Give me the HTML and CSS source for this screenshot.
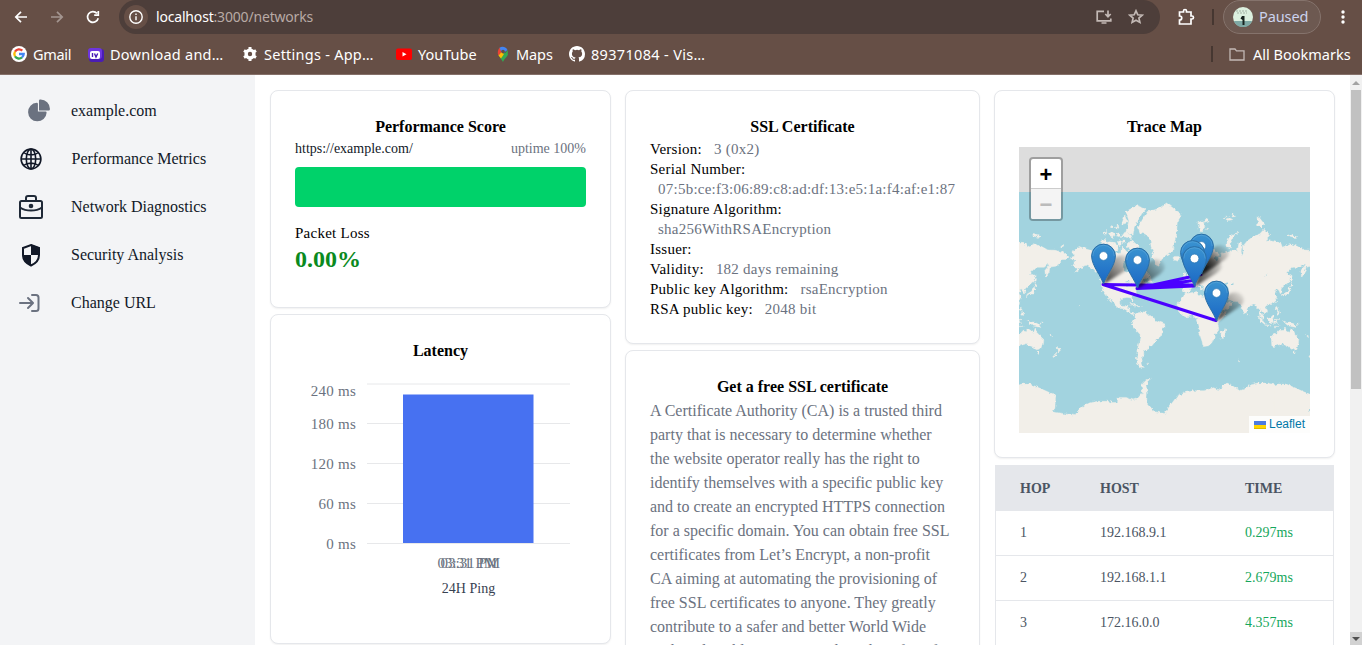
FILE: index.html
```html
<!DOCTYPE html>
<html lang="en">
<head>
<meta charset="utf-8">
<title>Networks</title>
<link rel="stylesheet" href="styles.css">
</head>
<body>
<header class="browser">
  <div class="toolbar">
    <div class="nav">
      <svg class="ic" viewBox="0 0 16 16"><path d="M14 8H3M8 2.8 2.8 8 8 13.2"/></svg>
      <svg class="ic dim" viewBox="0 0 16 16"><path d="M2 8h11M8 2.8 13.2 8 8 13.2"/></svg>
      <svg class="ic" viewBox="0 0 16 16"><path d="M13.2 9.2A5.4 5.4 0 1 1 12 4.4M13.3 2v4.2H9.2"/></svg>
    </div>
    <div class="omnibox">
      <span class="info"><svg class="ic" viewBox="0 0 16 16"><circle cx="8" cy="8" r="6.2"/><path d="M8 7.2v4M8 4.6v1.5"/></svg></span>
      <span class="url">localhost<i>:3000/networks</i></span>
      <svg class="ic soft" viewBox="0 0 16 16"><path d="M8 2.3H1.2v9.5h13.6V9.500M5.500 14h5M12 1.500v6M9.300 5 12 7.700 14.700 5"/></svg>
      <svg class="ic soft star" viewBox="0 0 16 16"><path d="m8 1.800 1.800 4 4.400.4-3.300 2.900 1 4.300L8 11.200l-3.900 2.200 1-4.300L1.800 6.200l4.400-.4z"/></svg>
    </div>
    <svg class="ic puzzle" viewBox="0 0 18 18"><path d="M2.500 4h4V3a1.500 1.500 0 0 1 3 0v1H14v4h1a1.500 1.500 0 0 1 0 3h-1v5H2.500v-4c3 0 3-4 0-4z"/></svg>
    <span class="sep"></span>
    <div class="profile">
      <svg class="avatar" viewBox="0 0 20 20"><circle cx="10" cy="10" r="10" fill="#dcf0df"/><path d="M.8 14h18.400a10 10 0 0 1-18.400 0z" fill="#7ea8a4"/><path d="M3 4h12M4 6h10" stroke="#a3b2a4" stroke-dasharray="2 1"/><path d="M9 9h2.500v9h-2v-5l-2-1.500z" fill="#18231f"/></svg>
      <span>Paused</span>
    </div>
    <svg class="dots" viewBox="0 0 4 16"><circle cx="2" cy="3" r="1.700"/><circle cx="2" cy="8" r="1.700"/><circle cx="2" cy="13" r="1.700"/></svg>
  </div>
  <div class="bookmarks">
    <a class="tight"><svg viewBox="0 0 16 16"><circle cx="8" cy="8" r="8" fill="#fff"/><g fill="none" stroke-width="2.300"><path d="M11.300 4.600A4.700 4.700 0 0 0 4 5.600" stroke="#ea4335"/><path d="M4 5.600a4.700 4.700 0 0 0 0 4.800" stroke="#fbbc04"/><path d="M4 10.400a4.700 4.700 0 0 0 7 1" stroke="#34a853"/><path d="M11 11.400A4.700 4.700 0 0 0 12.700 8H8" stroke="#4285f4"/></g></svg>Gmail</a>
    <a class="wide"><svg viewBox="0 0 16 16"><rect x="1" y="3" width="15" height="13" rx="3" fill="#4a1db5"/><rect x="0" y="2" width="14" height="11" rx="3" fill="#6d35de"/><rect x="2" y="5" width="10" height="8" rx="2" fill="#fff"/><path d="M4.500 7v4M6.500 7.500 8 11l1.700-3.500" fill="none" stroke="#4a1db5" stroke-width="1.400"/></svg>Download and…</a>
    <a class="wide"><svg viewBox="0 0 16 16"><circle cx="8" cy="8" r="3.900" fill="none" stroke="#fff" stroke-width="3.400"/><path d="M8 1v2.500M8 12.500V15M2 4.500l2 1.200M12 10.300l2 1.200M2 11.500l2-1.200M12 5.700l2-1.200" stroke="#fff" stroke-width="3"/></svg>Settings - App…</a>
    <a><svg viewBox="0 0 16 16"><rect y="2.500" width="16" height="11.500" rx="2" fill="#f00"/><path d="m6.500 6 4 2.200-4 2.200z" fill="#fff"/></svg><span class="yt">YouTube</span></a>
    <a class="maps"><svg viewBox="0 0 16 16"><path d="M8 16 3.500 9 8 6l5 2c-.5 3-3.500 4-5 8z" fill="#34a853"/><path d="M3.500 9.500C2 7 3 3 5 1.500L8 5.500z" fill="#ea4335"/><path d="M3.500 9.500 6 12.500 9 8 6.500 6z" fill="#fbbc04"/><path d="M4.500 1.800A5.200 5.200 0 0 1 12.500 4L8.500 7 6 5z" fill="#4285f4"/><path d="M12.500 4c1 3 0 4.500-1 6L9 9z" fill="#34a853"/><circle cx="8" cy="5.600" r="1.800" fill="#664f46"/></svg>Maps</a>
    <a class="wider"><svg viewBox="0 0 16 16"><path fill="#fff" d="M8 0C3.580 0 0 3.580 0 8c0 3.540 2.290 6.530 5.470 7.590.4.070.55-.17.550-.38 0-.19-.01-.82-.01-1.490-2.010.37-2.530-.49-2.690-.94-.09-.23-.48-.94-.82-1.130-.28-.15-.68-.52-.01-.53.63-.01 1.080.58 1.230.82.72 1.210 1.870.87 2.330.66.07-.52.280-.87.510-1.070-1.780-.2-3.640-.89-3.640-3.950 0-.87.310-1.590.82-2.150-.08-.2-.36-1.020.08-2.120 0 0 .67-.21 2.200.82a7.600 7.600 0 0 1 4 0c1.530-1.040 2.200-.82 2.200-.82.44 1.100.16 1.920.08 2.120.51.56.82 1.270.82 2.150 0 3.070-1.870 3.750-3.650 3.950.29.250.54.730.54 1.480 0 1.070-.01 1.930-.01 2.200 0 .21.150.46.55.38A8 8 0 0 0 16 8c0-4.420-3.580-8-8-8z"/></svg>89371084 - Vis…</a>
    <span class="sep"></span>
    <a class="all"><svg class="ic soft" viewBox="0 0 16 16"><path d="M1 3h5l1.500 1.800H15V14H1z" stroke-width="1.300"/></svg>All Bookmarks</a>
  </div>
</header>

<div class="page">
  <aside class="sidebar">
    <a><span class="slot shifted"><svg width="24" height="24" viewBox="0 0 22 21" fill="#6b7280"><path d="M16.975 11H10V4.025a1 1 0 0 0-1.066-.998 8.500 8.500 0 1 0 9.039 9.039.999.999 0 0 0-1-1.066h.002Z"/><path d="M12.500 0c-.157 0-.311.010-.565.027A1 1 0 0 0 11 1.020V10h8.975a1 1 0 0 0 1-.935c.013-.188.028-.374.028-.565A8.510 8.510 0 0 0 12.500 0Z"/></svg></span>example.com</a>
    <a class="nudge"><span class="slot"><svg width="24" height="24" viewBox="0 0 24 24" fill="none" stroke="#111827" stroke-width="1.600"><circle cx="12" cy="12" r="9.900"/><ellipse cx="12" cy="12" rx="4.700" ry="9.900"/><path d="M2 12h20M12 2v20M4.500 5.500c4 3.200 11 3.200 15 0M4.500 18.500c4-3.200 11-3.200 15 0"/></svg></span>Performance Metrics</a>
    <a><span class="slot"><svg width="24" height="24" viewBox="0 0 24 24" fill="none" stroke="#1f2937" stroke-width="2"><rect x="1" y="6" width="22" height="17" rx="1.500"/><path d="M7 6V3q0-2 2-2h6q2 0 2 2v3M1 12.500c6 4 16 4 22 0"/><circle cx="12" cy="11" r="2.300" fill="#1f2937" stroke="none"/></svg></span>Network Diagnostics</a>
    <a><span class="slot"><svg width="24" height="24" viewBox="0 0 24 24"><path d="M12 2 20 5v7c0 5-3.500 8.500-8 10.500C7.500 20.500 4 17 4 12V5z" fill="#f3f4f6" stroke="#111827" stroke-width="2"/><path d="M12 1.500 20.500 4.500V12H12zM12 12v10.500C7.500 20.500 3.500 17 3.500 12z" fill="#111827"/></svg></span>Security Analysis</a>
    <a><span class="slot"><svg width="24" height="24" viewBox="0 0 24 24" fill="none" stroke="#6b7280" stroke-width="2" stroke-linecap="round" stroke-linejoin="round"><path d="M1 12h12.500M9 7l5 5-5 5M13 4h4q2.500 0 2.500 2.500v11q0 2.500-2.500 2.500h-4"/></svg></span>Change URL</a>
  </aside>

  <main class="columns">
    <div class="col">
      <section class="card score">
        <h2>Performance Score</h2>
        <div class="row"><span>https://example.com/</span><span class="muted">uptime 100%</span></div>
        <div class="bar"></div>
        <div class="label">Packet Loss</div>
        <div class="loss">0.00%</div>
      </section>
      <section class="card latency">
        <h2>Latency</h2>
        <svg class="chart" width="291" height="250" viewBox="0 0 291 250">
          <g class="grid"><path d="M72 21h203M72 60.500h203M72 100.500h203M72 140.500h203M72 180.500h203"/></g>
          <rect x="108" y="31.500" width="130.500" height="148.500" fill="#4771f1"/>
          <g class="ticks"><text x="61" y="33">240 ms</text><text x="61" y="66">180 ms</text><text x="61" y="106">120 ms</text><text x="61" y="146">60 ms</text><text x="61" y="186">0 ms</text></g>
          <g class="times"><text x="142.500" y="205">03:31 PM</text><text x="145.500" y="205">03:31 PM</text></g>
          <text class="caption" x="173.500" y="230">24H Ping</text>
        </svg>
      </section>
    </div>

    <div class="col">
      <section class="card ssl">
        <h2>SSL Certificate</h2>
        <div>Version: <span>3 (0x2)</span></div>
        <div>Serial Number: <br><span>07:5b:ce:f3:06:89:c8:ad:df:13:e5:1a:f4:af:e1:87</span></div>
        <div>Signature Algorithm: <br><span>sha256WithRSAEncryption</span></div>
        <div>Issuer:</div>
        <div>Validity: <span>182 days remaining</span></div>
        <div>Public key Algorithm: <span>rsaEncryption</span></div>
        <div>RSA public key: <span>2048 bit</span></div>
      </section>
      <section class="card free">
        <h2>Get a free SSL certificate</h2>
        <p>A Certificate Authority (CA) is a trusted third<br>party that is necessary to determine whether<br>the website operator really has the right to<br>identify themselves with a specific public key<br>and to create an encrypted HTTPS connection<br>for a specific domain. You can obtain free SSL<br>certificates from Let’s Encrypt, a non-profit<br>CA aiming at automating the provisioning of<br>free SSL certificates to anyone. They greatly<br>contribute to a safer and better World Wide<br>Web and enable everyone to have benefits of</p>
      </section>
    </div>

    <div class="col">
      <section class="card trace">
        <h2>Trace Map</h2>
        <div class="map">
          <svg id="world" width="291" height="286" viewBox="0 0 291 286">
            <defs>
              <linearGradient id="pinFill" x1="0" y1="0" x2="0" y2="1"><stop offset="0" stop-color="#3a93d0"/><stop offset="1" stop-color="#1a67c5"/></linearGradient>
              <linearGradient id="shade" x1="0" y1="1" x2="1" y2="0"><stop offset="0" stop-opacity=".8"/><stop offset="1" stop-opacity=".02"/></linearGradient>
              <filter id="soft" x="-50%" y="-50%" width="200%" height="200%"><feGaussianBlur stdDeviation="1.800"/></filter>
              <path id="shadow" d="M0 0 8-23Q16-33 25-27 31-20 22-14z" fill="url(#shade)" filter="url(#soft)"/>
              <g id="pin"><path d="M0-.5C-2-8-11.900-19-11.900-28.500a11.900 11.900 0 0 1 23.800 0C11.900-19 2-8 0-.5z" fill="url(#pinFill)" stroke="#2a6ea5"/><path d="M-10.700-28.500a10.700 10.700 0 0 1 21.400 0" fill="none" stroke="#6db3e2" stroke-opacity=".4"/><circle cy="-28.500" r="4.400" fill="#fff" stroke="#2c77b5" stroke-width=".8"/></g>
              <filter id="coast" x="0" y="0" width="291" height="286" filterUnits="userSpaceOnUse"><feTurbulence type="fractalNoise" baseFrequency=".3" numOctaves="2" seed="4"/><feDisplacementMap in="SourceGraphic" scale="4" xChannelSelector="R" yChannelSelector="G"/></filter>
            </defs>
            <rect y="45" width="291" height="241" fill="#a2d3df"/>
            <g filter="url(#coast)">
              <g id="land" fill="#f2efe9" stroke="#f2efe9" stroke-width=".4"></g>
              <g id="seas" fill="#a2d3df"></g>
              <path d="M-5 258h301v34H-5z" fill="#f2efe9" transform="translate(0 12)"/>
            </g>
            <rect y="278" width="291" height="8" fill="#f2efe9"/>
            <rect width="291" height="45" fill="#ddd"/>
            <g fill="none" stroke="#4b00ff" stroke-width="3" stroke-linejoin="round" stroke-linecap="round"><path d="M197 173.500 84 137.500 118 138 175 138M118 141.500l57-2.500M118 141.500l56-8M118 141.500l64-14"/></g>
            <g id="pins"></g>
          </svg>
          <div class="zoom"><b>+</b><b class="off">−</b></div>
          <div class="credit"><svg width="12" height="8"><path fill="#4C7BE1" d="M0 0h12v4H0z"/><path fill="#FFD500" d="M0 4h12v3H0z"/><path fill="#E0BC00" d="M0 7h12v1H0z"/></svg>Leaflet</div>
        </div>
      </section>
      <table class="hops">
        <thead><tr><th class="hop">HOP</th><th class="host">HOST</th><th>TIME</th></tr></thead>
        <tbody>
          <tr><td>1</td><td>192.168.9.1</td><td class="ok">0.297ms</td></tr>
          <tr><td>2</td><td>192.168.1.1</td><td class="ok">2.679ms</td></tr>
          <tr><td>3</td><td>172.16.0.0</td><td class="ok">4.357ms</td></tr>
        </tbody>
      </table>
    </div>
  </main>
  <div class="scroll"><i class="up"></i><span></span><svg class="down" viewBox="0 0 12 13"><path d="M2 5h8L6 9z"/></svg></div>
</div>
<script src="map.js"></script>
</body>
</html>
```
FILE: map.js
```js
// Coastlines as "lon,lat" rings, drawn in Web Mercator with a 256px world.
const land = [
  // Eurasia and Africa
  "-9,37 -9.5,39 -9,43 -2,43.5 -1,46 -4.5,48.3 -1.5,48.7 -1.8,49.7 1.5,50.3 4,52 5,53.3 8.500,53.800 8.200,57 10.500,57.600 10,55.500 11,54 14,54 18.500,54.700 21,55.500 21.500,57.500 24,57.200 24,59 28,59.700 29,60.200 23,60 21.500,61 21.500,63 25,65 24,65.800 22,65.500 17.500,62 17.500,60.500 18.500,59.800 16.500,57 15,56 13,55.500 11,59 8,58 5.500,59 5,62 10,64 14,67.500 19,69.800 25,71 31,70.200 33,69.300 41,67.500 40,66.200 33,66.700 35,64.300 38,64 40,65 42,66.500 44,66.200 44,68.300 46,68 53,68.500 54,68 60,69 61,69.800 65,69 68,68.500 67,70 69,73 73,72.500 72,69 73,66.500 75,68 74,71.500 76,72 80,73.500 87,75 95,76 98,76.200 104,77.700 112,76 107,73.500 113,73.700 123,73 127,73.300 130,71 140,72.500 150,71.500 160,69.700 170,69.500 180,68.800 190,66 186,64.500 180,64.500 178,62.500 171,60 163,59.500 162,56 157,51.200 156,57 163,61.500 160,61.500 155,59.300 143,59.300 135,54.700 141,53 140,48 132,43 128,40 129,36 127,34.500 125.500,38 122,40.500 121,39 118,39 122,37 119.500,35 122,31 120,26.500 114,22.300 108,21.500 106,19 109,13 107,10.500 105,8.700 102,12.500 100,13.300 99.500,10 103,4.500 104,1.300 101,3 98.500,8 97.500,16 94.500,16 92,21.500 89,22 86,20.500 80,15.500 80,12 77.500,8 74,14 72.500,20 70,21 67,25 61,25 57,27 51,29 48,30 50,27 51.500,25 54,24 56,26 58,23.500 59.800,22.500 55,17.500 52,16 45,12.800 43,13 42.500,16 39,21 35,28 35,29.500 34,28 32.500,30 33.500,27.500 35.500,24 37,21 37.500,18.500 39.500,15.500 43,12 44,10.500 51,12 50,8 46,3 40,-3 39,-7 40.500,-11 40,-15 35,-20 35.500,-24 32.500,-26 31,-30 26,-34 20,-34.800 18,-33 17,-29 14.500,-22 12,-17 13.500,-12 12,-6 9,-1 9.500,4 6,4.300 4,6.300 -2,4.800 -8,4.300 -13,8.500 -17,13 -16.500,19 -17,21 -13,27.500 -10,30 -9,33 -6,35.800 -2,35.200 10,37.200 11,33.500 15,32 20,31 20,32.800 25,31.800 32,31 34.300,31.500 36,35 36,36.700 30,36.500 27,37.500 26.500,40 30,41.200 35,42 41,41.300 38,44.500 39,47 35,46.500 33,44.500 33,46 30.500,46 28,43 28,41 24,40.700 23,39 24,38 22.500,36.500 19.500,40 19,42 14,45 12.500,45 14,42.500 18.500,40 16.500,39.500 16,38 12.500,41.500 9,44.300 3,43 3,41.500 -.5,38.500 -2,36.800 -5.500,36",
  // North and Central America
  "-168,65.600 -162,66.500 -166,68.500 -156,71.300 -145,70 -135,69 -128,70.500 -123,69.500 -115,68 -108,68 -101,67.800 -96,68.200 -95,71.500 -92,70 -88,68.500 -85,69.500 -81.500,69 -82,67 -87,65 -94,61.500 -94.500,58.800 -92,57 -85,55.300 -82,55 -82,52.800 -79.500,51.300 -79,54.500 -76.500,57 -78,59 -77.500,62.500 -73,62 -69.500,61 -69.500,58.900 -66,58.800 -64.500,60.300 -61,56 -56,53 -57,51.500 -60,50.200 -66,50.200 -69,48.500 -65,48.500 -64.500,46.500 -61,46 -66,43.500 -67,45 -70,43.500 -70,41.700 -74,40.500 -76,38 -75.700,35.500 -81,31.500 -80,26.500 -81,25.200 -83,29.500 -89,30.300 -94,29.500 -97.500,27 -97.500,22 -95,18.500 -91,18.700 -90,21 -87,21.500 -88.500,16 -83.500,15 -83.500,10.500 -80,9 -77,8.500 -79,7.500 -83,8.200 -86,11 -88,13 -94,16 -97,15.700 -105,20 -106,23 -112,29 -114.700,31.500 -110,24 -112,25 -115,29 -118,34 -121,35 -124,40 -124.300,48 -123,49 -130,55 -137,58.700 -146,60.700 -151,60 -154,58.500 -162,55 -158,58.500 -162,59 -165,61 -161,64 -166,64.500",
  // South America
  "-77,8 -72,12 -62,10.700 -57,6 -51,4.500 -50,0 -44,-2.500 -35.500,-5.500 -35,-8.500 -39,-13 -39.500,-19 -42,-23 -48,-26 -49,-29 -53.500,-34 -58,-34 -57,-37 -62,-39 -65,-41 -65,-44 -67.500,-46 -66,-48 -69,-51 -68.500,-53 -65,-55 -70,-55.300 -74,-52 -75.500,-47 -73,-42 -73.500,-37 -71.500,-30 -70,-20 -76,-14 -81,-6 -80,-2.500 -77.500,2",
  // Greenland
  "-44,60 -48,61 -52,65 -54,67.500 -51,69.500 -54.500,71 -56,74 -61,76 -70,76.500 -73,78.200 -66,80.500 -60,82 -45,82.500 -33,83.500 -22,82.500 -12,81.500 -18,79.500 -19,76 -22,73 -25,71 -22,70.200 -30,68 -38,65.800 -42,62.500",
  // Canadian Arctic
  "-91,76.500 -80,76.200 -78,78.500 -68,81.500 -62,82.500 -75,83.100 -90,82 -86,80 -88,78",
  "-96,79 -88,79.500 -92,81.300", "-105,78.200 -100,78 -101,79", "-116,76 -108,75 -105,76 -110,77",
  "-122,76.500 -118,76 -117,77.300", "-104,75.500 -98,75.200 -98,76.500 -103,76.500", "-112,78.300 -109,78 -110,78.800",
  "-97,75 -93,75.200 -81,74.600 -83,75.800 -92,76.700", "-90,71.500 -84,70 -76,69 -72,67.500 -73,64.600 -66,62 -65,65 -62,66.700 -68,70 -78,73 -85,73.700",
  "-117,69.500 -105,69 -101,70 -105,73 -115,73.300 -118,71.500", "-124,71.500 -120,71.500 -116,73 -119,74.200 -124,74.200",
  "-101,72 -97,71.500 -97,73.800 -102,73.500", "-95,72.500 -91,73 -91,74 -95,74", "-86,64 -81,63.500 -85,65.800", "-59,47.700 -53,46.700 -56,51.500",
  "-128,50.500 -123.500,48.500 -125,50",
  // Islands of the Atlantic and Arctic
  "-5.500,50 1,51 1.500,52.700 -2,55.800 -3,58.500 -6,57 -3,54 -5,52", "-10,51.700 -6,52.200 -6,55 -10,54", "-24,65.500 -22,64 -19,63.500 -14,65 -16,66.300 -22,66.300",
  "11,79.500 14,77 18,77 21,78.500 18,80", "20,79.600 27,80 22,80.400", "25,77.800 23,78 22,77.600", "52,71.300 57,70.700 56,73 61,75.500 69,76.800 62,76.200 55,75 52,73",
  "95,79 100,78.200 105,79 96,81", "137,75.700 147,75 150,75.200 140,76", "178,71 182,71.300 180,71.700", "50,80 60,80.300 53,80.900", "59,80.900 64,81 61,81.500", "48,80.500 50,80.800 47,80.800",
  // Caribbean
  "-85,22 -78,22.500 -74.500,20 -78,20 -82,22.500", "-74,18.300 -68.500,18.500 -70,20 -73,20", "-78,18 -76.500,18 -77,18.500",
  // Asia and Pacific
  "44,-16 46,-16 50,-12.300 50,-16 47,-25 44,-24.500 43.500,-22", "80,8 81.500,7 80.500,9.500", "130,31 132,34 136,33.500 140,35 142,40 140,41 137,37 131,34.300", "140,42 145,43.500 142,45.500",
  "142,46 144,49 143,54 142,52", "120,22.500 122,25 121,25", "120,14 124,13 122,18.500 120.500,18", "122,7 126,6.500 126,9.500 124,12 123,9", "109,1 111,-3 116,-4 119,5 117,7 113,3",
  "95,5.500 98,4.500 106,-4 105,-6 101,-3", "105,-7 114,-8.500 112,-7", "119,-3 120,1 125,1 121,0 123,-5 121,-3 119.500,-5.500", "131,-1 135,-3 141,-3 147,-6 150,-10.500 143,-9 138,-8 133,-4",
  "149,-6 152,-4 151,-6", "118,-9 127,-8.500 119,-9.500", "114,-22 122,-18 126,-14 130,-15 131,-12 136,-12 136,-15 140,-17.500 142.500,-11 146,-18.500 153,-25.500 152.500,-32 150,-37.500 144,-38.500 138,-35 135,-34 131,-31.500 124,-33 118,-35 115,-34",
  "145,-41 148,-41 147,-43.500", "173,-35 178.500,-38 175,-41.500 174.500,-38", "173,-41 171,-44.500 169,-46.500 167,-46 171,-42.500", "164,-20 167,-22.500 165,-21.500", "-156,19 -155,19.500 -156,20",
  "-60,-51.500 -58,-52 -60,-52.300", "68,-49 70,-49.500 69,-49.800",
  // Antarctica
  "-240,-67 -236,-66.500 -225,-67 -210,-69 -200,-71 -189,-72 -190,-77 -195,-78 -175,-78.600 -162,-79 -157,-77.500 -146,-75.500 -130,-74.500 -115,-74.500 -110,-75 -102,-75 -101,-73 -90,-73 -80,-74 -74,-73.500 -67,-71 -68,-67 -62,-64.500 -56,-63 -62,-67 -60,-71 -61,-75 -50,-78 -36,-78.500 -28,-76 -18,-72.500 -8,-71 5,-70 20,-70 33,-68.500 40,-69.500 52,-66 58,-67 70,-70 78,-69 84,-67 95,-66 110,-66 120,-67 135,-66.500 150,-69 160,-70.500 171,-72 168,-77 165,-78.500 180,-79 180,-85.500 -240,-85.500"
];
const seas = [
  "47,45 53,46.800 53,45 51,44.500 54,41 54,37 49,37.500 49,41", "-92,47 -85,48.500 -85,46.500", "-87.500,42 -85,46 -88,44", "-83,46 -80,45 -82,43.500",
  "31,-2.500 34,-.5 34,-2.500", "104,51.500 110,55.500 106,52.500", "58,44 61,46.500 61,44"
];

const project = (lon, lat) => {
  const r = lat * Math.PI / 180;
  return [171 + lon * 256 / 360, 173 - Math.log(Math.tan(Math.PI / 4 + r / 2)) * 128 / Math.PI];
};
const ring = (pts, shift) => "M" + pts.split(" ").map(p => {
  const [x, y] = project(...p.split(",").map(Number));
  return (x + shift).toFixed(1) + " " + y.toFixed(1);
}).join("L") + "Z";
const add = (parent, name, attrs) => {
  const el = document.createElementNS("http://www.w3.org/2000/svg", name);
  for (const k in attrs) el.setAttribute(k, attrs[k]);
  document.getElementById(parent).appendChild(el);
};
for (const shift of [-256, 0, 256]) {
  land.forEach(p => add("land", "path", { d: ring(p, shift) }));
  seas.forEach(p => add("seas", "path", { d: ring(p, shift) }));
}
const pins = [[182.500, 127.500], [173.500, 134], [84.500, 137.500], [175.500, 140], [118.500, 141.500], [197.500, 174.500]];
for (const shape of ["shadow", "pin"]) {
  pins.forEach(([x, y]) => add("pins", "use", { href: "#" + shape, x, y }));
}
```
FILE: styles.css
```css
* { box-sizing: border-box; }
body { margin: 0; width: 1362px; height: 645px; overflow: hidden; display: flex; flex-direction: column; background: #fff; font-family: "Liberation Serif", serif; font-size: 16px; line-height: 24px; color: #111827; }

/* browser frame */
.browser { flex: none; height: 75px; background: #664f46; border-bottom: 1px solid #857069; color: #fff; font-family: "Noto Sans", sans-serif; font-size: 14.5px; }
.ic { width: 16px; height: 16px; flex: none; fill: none; stroke: #fff; stroke-width: 1.7; }
.dim { opacity: .4; }
.soft { stroke: #c3b9b5; }
.toolbar { display: flex; align-items: center; height: 34px; }
.nav { display: flex; gap: 20px; width: 119px; padding-left: 13px; }
.omnibox { display: flex; align-items: center; width: 1041px; height: 34px; padding: 0 16px 0 5px; border-radius: 17px; background: #4d3e3a; }
.info { display: flex; align-items: center; justify-content: center; width: 24px; height: 24px; border-radius: 50%; background: #664f46; margin-right: 8px; }
.info .ic { stroke-width: 1.4; }
.url { flex: 1; font-size: 14px; letter-spacing: -.18px; }
.url i { font-style: normal; color: #b8aaa5; }
.star { margin-left: 16px; }
.puzzle { width: 18px; height: 18px; margin-left: 17px; }
.sep { width: 2px; height: 16px; background: #463731; }
.puzzle + .sep { margin-left: 17px; }
.profile { display: flex; align-items: center; gap: 6px; width: 98px; height: 34px; margin-left: 9px; padding-left: 9px; border: 1px solid #85736c; border-radius: 17px; background: #6d5951; color: #cbd3ee; line-height: 20px; }
.profile span { letter-spacing: -.1px; margin-top: -2px; }
.avatar { width: 20px; height: 20px; }
.dots { width: 4px; height: 16px; margin-left: 20px; fill: #fff; }
.bookmarks { display: grid; grid-template-columns: 77px 154px 154px 99px 74px 642px 18px 1fr; align-items: center; height: 39px; padding-left: 11px; }
.bookmarks a { display: flex; align-items: center; gap: 6px; white-space: nowrap; }
.bookmarks a svg { width: 16px; height: 16px; flex: none; }
.bookmarks .tight { letter-spacing: -.3px; }
.bookmarks .wide { letter-spacing: .25px; }
.bookmarks .wider { letter-spacing: .33px; }
.bookmarks .maps { gap: 5px; letter-spacing: -.1px; }
.bookmarks .all { gap: 8px; }

/* page */
.page { flex: 1; display: flex; min-height: 0; }
.sidebar { flex: none; width: 255px; padding-top: 12px; background: #f3f4f6; }
.sidebar a { display: flex; align-items: center; height: 48px; }
.slot { display: flex; width: 52px; margin-left: 19px; }
.slot.shifted { width: 44px; margin-left: 27px; }
.nudge .slot { width: 52.5px; }
.columns { flex: 1; display: grid; grid-template-columns: 341px 355px 341px; gap: 14px; padding: 15px; min-width: 0; align-items: start; overflow: hidden; }
.col { display: flex; flex-direction: column; gap: 6px; }
.card { padding: 24px; border: 1px solid #e5e7eb; border-radius: 8px; box-shadow: 0 1px 2px rgba(0,0,0,.06); background: #fff; }
h2 { margin: 0; font-size: 16px; line-height: 24px; text-align: center; color: #000; }
.muted { color: #6b7280; }

.score { height: 218px; }
.row { display: flex; justify-content: space-between; font-size: 14px; line-height: 20px; }
.bar { height: 40px; margin: 8px 0 16px; border-radius: 4px; background: #00d26a; }
.label { font-size: 15px; line-height: 20px; letter-spacing: .25px; color: #000; }
.loss { font-size: 24px; line-height: 32px; font-weight: 700; color: #0a8a1e; }

.latency { height: 330px; }
.chart { display: block; }
.grid { fill: none; stroke: #e7e8ea; }
.ticks { font-size: 15px; text-anchor: end; fill: #6b7280; letter-spacing: .25px; }
.times { font-size: 15px; fill: #6b7280; }
.caption { font-size: 14px; text-anchor: middle; fill: #374151; }

.ssl { height: 254px; font-size: 15px; color: #000; }
.ssl div { line-height: 20px; letter-spacing: .245px; white-space: nowrap; }
.ssl span { display: inline-block; margin-left: 8px; color: #6b7280; }
.free { height: 420px; }
.free p { margin: 0; color: #6b7280; white-space: nowrap; }

.trace { height: 368px; }
.map { position: relative; width: 291px; height: 286px; margin-top: 8px; overflow: hidden; }
.map > svg { display: block; }
.zoom { position: absolute; left: 10px; top: 10px; width: 34px; border: 2px solid rgba(0,0,0,.28); border-radius: 4px; background: #fff; background-clip: padding-box; }
.zoom b { display: block; height: 29px; font: bold 22px/31px "Liberation Sans", sans-serif; text-align: center; color: #000; }
.zoom .off { height: 31px; border-top: 1px solid #ccc; border-radius: 0 0 2px 2px; background: #f4f4f4; color: #bbb; }
.credit { position: absolute; right: 0; bottom: 0; display: flex; align-items: center; gap: 3px; height: 17px; padding: 0 5px; background: rgba(255,255,255,.85); color: #0078a8; font: 12px/17px "Liberation Sans", sans-serif; }

.hops { width: 339px; margin: 1px 0 0 1px; border-collapse: separate; border-spacing: 0; table-layout: fixed; font-size: 14px; line-height: 20px; color: #4b5563; }
.hops th, .hops td { padding: 0 0 0 25px; text-align: left; }
.hops th { height: 46px; padding-top: 1px; background: #e5e7eb; }
.hops .hop { width: 80px; }
.hops .host { width: 145px; }
.hops td { height: 45px; border-bottom: 1px solid #e5e7eb; }
.hops td:first-child { padding-left: 24px; border-left: 1px solid #e5e7eb; }
.hops td:last-child { border-right: 1px solid #e5e7eb; }
.hops .ok { color: #16a75c; }

.scroll { flex: none; width: 12px; display: flex; flex-direction: column; align-items: center; background: #f1f1f1; }
.scroll span { width: 10px; height: 299px; margin-top: 5px; background: #c1c1c1; }
.up { margin-top: 6px; border: 4px solid transparent; border-top: 0; border-bottom-color: #a3a3a3; }
.down { width: 12px; height: 13px; margin-top: auto; background: #d2d2d2; fill: #505050; }
```
